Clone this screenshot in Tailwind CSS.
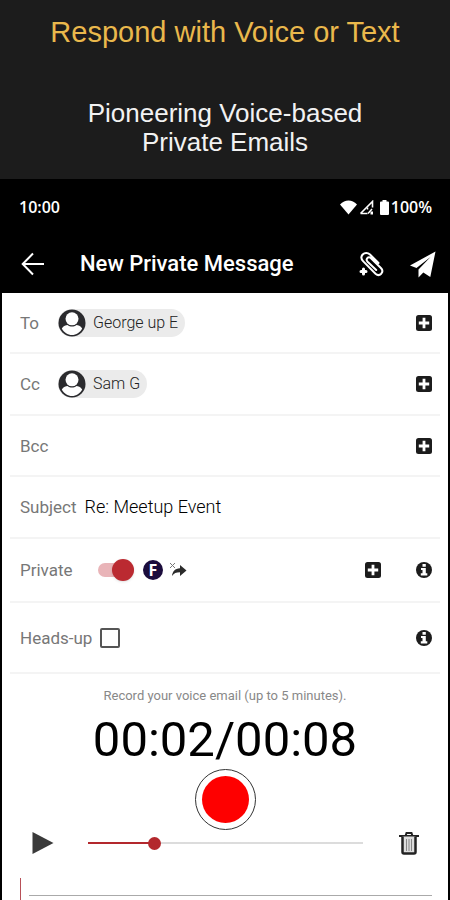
<!DOCTYPE html>
<html lang="en">
<head>
<meta charset="utf-8">
<meta name="viewport" content="width=device-width, initial-scale=1">
<title>New Private Message</title>
<script src="https://cdn.jsdelivr.net/npm/@tailwindcss/browser@4"></script>
</head>
<body class="bg-[#1c1c1c] font-['Roboto',sans-serif]">
<svg class="hidden" aria-hidden="true">
  <symbol id="plus" viewBox="0 0 16 16"><rect width="16" height="16" rx="2.5" fill="#1c1c1c"/><path d="M8 2.800v10.400M2.800 8h10.400" stroke="#fff" stroke-width="2.800"/></symbol>
  <symbol id="info" viewBox="0 0 16 16"><circle cx="8" cy="8" r="8" fill="#1c1c1c"/><path d="M6.500 2h3.300v2.700H6.500zM5 6h4.800v5.200H11.300v2.200H4.800v-2.200h1.700V8H5z" fill="#fff"/></symbol>
  <symbol id="person" viewBox="0 0 28 28"><circle cx="14" cy="14" r="13.500" fill="#2b2b2e"/><path d="M3.800 19.500C5.500 16.800 8 16 9.500 16c2.800 2 6.200 2 9 0 1.500 0 4 .8 5.700 3.500C22 23.500 18.300 26 14 26S6 23.500 3.800 19.500z" fill="#fff"/><circle cx="14" cy="9.800" r="6.500" fill="#fff"/></symbol>
</svg>
<div class="flex min-h-screen flex-col">
  <header class="px-4 pt-4 pb-[22px] text-center font-['Liberation_Sans',sans-serif]">
    <h1 class="text-[29px] leading-8 text-[#eab84c]">Respond with Voice or Text</h1>
    <p class="pt-[51px] text-[26px] leading-[29px] text-[#f2f2f2]">Pioneering Voice-based<br>Private Emails</p>
  </header>

  <main class="flex grow flex-col border-x-2 border-black bg-white">
    <div class="bg-black text-white">
      <div class="flex items-center justify-between pt-4 pr-4 pl-[17px] font-['Open_Sans',sans-serif] text-base leading-6 font-semibold">
        <span>10:00</span>
        <span class="flex items-center gap-0.5">
          <svg class="h-[15px] w-[17px]" viewBox="0 0 17 15" fill="#fff"><path d="M0 4.500C5-.8 12-.8 17 4.500L8.500 14.500z"/></svg>
          <svg class="h-[15px] w-[15px]" viewBox="0 0 15 15"><path d="M1.500 13.500 13.500 1.500v6M1.500 13.500h7" fill="none" stroke="#fff" stroke-width="1.600"/><path d="M8.500 7.500v2M9 13.500l4-4.500" stroke="#fff" stroke-width="1.500"/><path d="M11.500 11.500h2.500v3h-2.500z" fill="#fff"/></svg>
          <svg class="ml-1 h-[15px] w-[9px]" viewBox="0 0 9 15" fill="#fff"><path d="M2.500 0h4v1.500H8q1 0 1 1V14q0 1-1 1H1q-1 0-1-1V2.500q0-1 1-1h1.500z"/></svg>
          <span>100%</span>
        </span>
      </div>
      <div class="flex h-[74px] items-center pt-4 pr-3 pl-[19px]">
        <button type="button" aria-label="Back"><svg class="h-6 w-6" viewBox="0 0 24 24" fill="none" stroke="#fff" stroke-width="2"><path d="M23 12H2M12 1.500 1.700 12 12 22.500"/></svg></button>
        <h2 class="grow pl-[35px] text-[22px] leading-7 font-medium">New Private Message</h2>
        <button type="button" aria-label="Attach file"><svg class="h-7 w-7" viewBox="0 0 28 28" fill="none" stroke="#fff" stroke-width="2" stroke-linecap="round"><path d="M20.500 13 12 4.500C9.700 2.300 6.600 2.400 4.700 4.500c-1.800 2-1.600 4.700.6 6.900L17.500 23.700c1.900 1.700 4.200 1.600 5.700 0 1.500-1.700 1.400-4-.3-5.700L13 8.200c-1.300-1.200-2.700-1.100-3.700 0-1 1.200-.9 2.400.3 3.600l8.600 8.200"/><path d="M5.500 19v5M3 21.500h5" stroke-width="3"/></svg></button>
        <button type="button" aria-label="Send" class="ml-6"><svg class="h-[27px] w-[26px]" viewBox="0 0 26 27" fill="#fff"><path d="M25.500.5 0 14.500l6.500 2.500L20.500 6 8.500 18.500v8l4.800-5 7 4.500z"/></svg></button>
      </div>
    </div>

    <form class="pt-px text-[17px] leading-5 text-[#777]">
      <div class="mx-2 flex h-[60px] items-center border-b-2 border-[#f4f4f4] pr-2 pl-[10px]">
        <span class="w-[38px]">To</span>
        <span class="flex items-center rounded-full bg-[#ebebeb] pr-[7px] text-base font-light text-[#222]"><svg class="mr-[7px] h-7 w-7"><use href="#person"/></svg>George up E</span>
        <button type="button" aria-label="Add To recipient" class="ml-auto"><svg class="h-4 w-4"><use href="#plus"/></svg></button>
      </div>
      <div class="mx-2 flex h-[62px] items-center border-b-2 border-[#f4f4f4] pr-2 pl-[10px]">
        <span class="w-[38px]">Cc</span>
        <span class="flex items-center rounded-full bg-[#ebebeb] pr-[7px] text-base font-light text-[#222]"><svg class="mr-[7px] h-7 w-7"><use href="#person"/></svg>Sam G</span>
        <button type="button" aria-label="Add Cc recipient" class="ml-auto"><svg class="h-4 w-4"><use href="#plus"/></svg></button>
      </div>
      <div class="mx-2 flex h-[61px] items-center border-b-2 border-[#f4f4f4] pr-2 pl-[10px]">
        <span>Bcc</span>
        <button type="button" aria-label="Add Bcc recipient" class="ml-auto"><svg class="h-4 w-4"><use href="#plus"/></svg></button>
      </div>
      <div class="mx-2 flex h-[62px] items-center border-b-2 border-[#f4f4f4] pr-2 pl-[10px]">
        <label for="subject">Subject</label>
        <input id="subject" type="text" value="Re: Meetup Event" class="ml-2 min-w-0 grow text-[18px] font-light text-black outline-none">
      </div>
      <div class="mx-2 flex h-16 items-center border-b-2 border-[#f4f4f4] pr-2 pl-[10px]">
        <label for="private" class="w-[78px]">Private</label>
        <input id="private" type="checkbox" role="switch" checked class="relative h-[22px] w-9 appearance-none before:absolute before:inset-x-0 before:top-1 before:h-[14px] before:rounded-full before:bg-[#e9b4b8] after:absolute after:top-0 after:right-0 after:h-[22px] after:w-[22px] after:rounded-full after:bg-[#bb2a31] after:shadow-sm">
        <span class="ml-[9px] flex h-5 w-5 items-center justify-center rounded-full bg-[#1b0c3c] font-['Open_Sans',sans-serif] text-base leading-5 font-bold text-white">F</span>
        <svg class="ml-1.5 h-4 w-[18px]" viewBox="0 0 18 16"><path d="M1 1l5 5M6 1 1 6" stroke="#777" stroke-width="1"/><path d="M11 3l6.500 5.500-6.500 5.500v-3.700c-4 0-6 1-8 3.700C3.500 9.500 6 6.500 11 6.300z" fill="#2b2b2b"/></svg>
        <button type="button" aria-label="Add private option" class="ml-auto"><svg class="h-4 w-4"><use href="#plus"/></svg></button>
        <button type="button" aria-label="About private messages" class="ml-[35px]"><svg class="h-4 w-4"><use href="#info"/></svg></button>
      </div>
      <div class="mx-2 flex h-[71px] items-center border-b-2 border-[#f4f4f4] pr-2 pl-[10px]">
        <label for="headsup">Heads-up</label>
        <input id="headsup" type="checkbox" class="ml-2 h-5 w-5 appearance-none rounded-xs border-2 border-[#555]">
        <button type="button" aria-label="About heads-up" class="ml-auto"><svg class="h-4 w-4"><use href="#info"/></svg></button>
      </div>
    </form>

    <section class="flex grow flex-col pt-3">
      <p class="text-center text-[13px] leading-5 text-[#888]">Record your voice email (up to 5 minutes).</p>
      <div class="pt-2 text-center text-[49px] leading-[52px] text-black">00:02/00:08</div>
      <button type="button" aria-label="Record" class="mt-[3px] flex h-[61px] w-[61px] items-center justify-center self-center rounded-full border border-[#333]"><span class="h-[47px] w-[47px] rounded-full bg-[#fe0000]"></span></button>
      <div class="flex h-[26px] items-center pr-[29px] pl-[30px]">
        <button type="button" aria-label="Play"><svg class="h-6 w-[22px]" viewBox="0 0 22 24"><path d="M.5 1 21.500 12 .5 23z" fill="#3a3a3a"/></svg></button>
        <input type="range" aria-label="Playback position" min="0" max="100" value="23" class="mr-9 ml-[34px] h-[13px] min-w-0 grow appearance-none bg-linear-to-r from-[#b3282d] from-24% to-[#dcdcdc] to-24% bg-[length:100%_2px] bg-center bg-no-repeat [&::-webkit-slider-thumb]:h-[13px] [&::-webkit-slider-thumb]:w-[13px] [&::-webkit-slider-thumb]:appearance-none [&::-webkit-slider-thumb]:rounded-full [&::-webkit-slider-thumb]:bg-[#b3282d]">
        <button type="button" aria-label="Delete recording"><svg class="h-6 w-5" viewBox="0 0 20 24"><path d="M0 5h20M6.500 5 7.500 2h5l1 3" fill="none" stroke="#222" stroke-width="2"/><path d="M3.500 5.500v15.500q0 1.500 1.500 1.500h10q1.500 0 1.500-1.500V5.500" fill="#ddd" stroke="#222" stroke-width="2.500"/><path d="M7.500 8v12M10 8v12M12.500 8v12" stroke="#888" stroke-width="1"/></svg></button>
      </div>
      <div class="mt-auto flex h-[22px] items-end pr-4 pl-[18px]">
        <span class="mr-2 h-full w-px bg-[#b85058]"></span>
        <span class="mb-1 h-px grow bg-[#aaa]"></span>
      </div>
    </section>
  </main>
</div>
</body>
</html>
